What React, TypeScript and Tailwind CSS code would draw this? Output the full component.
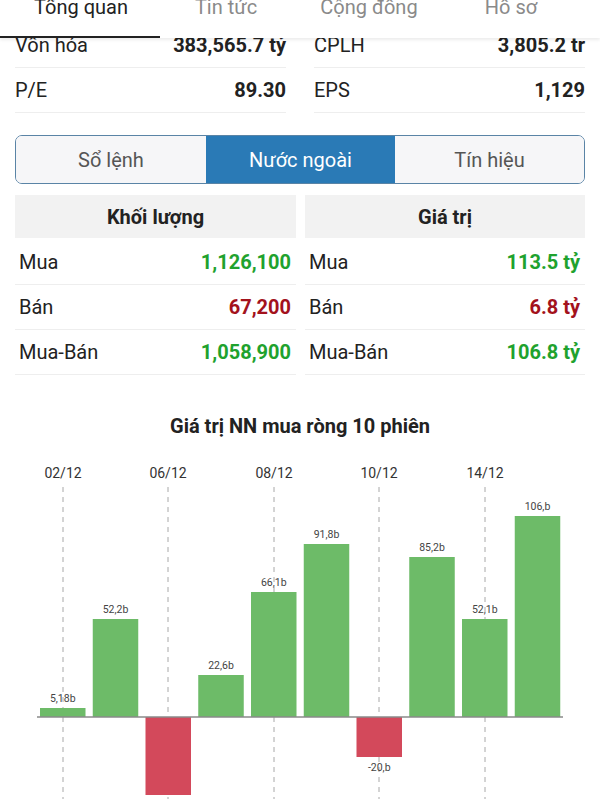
import React from 'react'

const font = { fontFamily: 'Roboto, "Noto Sans", sans-serif' }

const tabs = [
  { label: 'Tổng quan', w: 'w-[162px]', active: true },
  { label: 'Tin tức', w: 'w-[128px]', active: false },
  { label: 'Cộng đồng', w: 'w-[158px]', active: false },
  { label: 'Hồ sơ', w: 'w-[126px]', active: false },
]

const info = [
  [
    { k: 'Vốn hóa', v: '383,565.7 tỷ' },
    { k: 'P/E', v: '89.30' },
  ],
  [
    { k: 'CPLH', v: '3,805.2 tr' },
    { k: 'EPS', v: '1,129' },
  ],
]

const tables = [
  {
    title: 'Khối lượng',
    rows: [
      { k: 'Mua', v: '1,126,100', up: true },
      { k: 'Bán', v: '67,200', up: false },
      { k: 'Mua-Bán', v: '1,058,900', up: true },
    ],
  },
  {
    title: 'Giá trị',
    rows: [
      { k: 'Mua', v: '113.5 tỷ', up: true },
      { k: 'Bán', v: '6.8 tỷ', up: false },
      { k: 'Mua-Bán', v: '106.8 tỷ', up: true },
    ],
  },
]

// chart data: height in px, label
const bars = [
  { h: 9, label: '5,18b' },
  { h: 98, label: '52,2b' },
  { h: -78, label: '' },
  { h: 42, label: '22,6b' },
  { h: 125, label: '66,1b' },
  { h: 173, label: '91,8b' },
  { h: -40, label: '-20,b' },
  { h: 160, label: '85,2b' },
  { h: 98, label: '52,1b' },
  { h: 201, label: '106,b' },
]

const dates = [
  { x: 63, t: '02/12' },
  { x: 168, t: '06/12' },
  { x: 274, t: '08/12' },
  { x: 379, t: '10/12' },
  { x: 485, t: '14/12' },
]

function Chart() {
  const base = 278
  return (
    <svg width="600" height="360" viewBox="0 0 600 360" className="block">
      {dates.map((d) => (
        <g key={d.t}>
          <text x={d.x} y={39} textAnchor="middle" fontSize="14" fill="#333" style={font}>
            {d.t}
          </text>
          <line x1={d.x} y1={48} x2={d.x} y2={360} stroke="#a8a8a8" strokeWidth="1" strokeDasharray="5 5" />
        </g>
      ))}
      {bars.map((b, i) => {
        const x = 40 + i * 52.75
        const y = b.h > 0 ? base - b.h : base
        return (
          <rect
            key={i}
            x={x}
            y={y}
            width={45.5}
            height={Math.abs(b.h)}
            fill={b.h > 0 ? '#6dbb68' : '#d3495b'}
          />
        )
      })}
      <line x1={37} y1={base} x2={563} y2={base} stroke="#8a8a8a" strokeWidth="1.5" />
      {bars.map((b, i) => {
        if (!b.label) return null
        const cx = 40 + i * 52.75 + 22.75
        const y = b.h > 0 ? base - b.h - 6 : base - b.h + 14
        return (
          <text key={i} x={cx} y={y} textAnchor="middle" fontSize="10.5" fill="#444" style={font}>
            {b.label}
          </text>
        )
      })}
    </svg>
  )
}

export default function App() {
  return (
    <div className="relative w-[600px] h-[800px] overflow-hidden bg-white text-[#222]" style={font}>
      {/* thanh tab trên cùng */}
      <div className="absolute top-0 left-0 right-0 h-[38px] bg-white shadow-[0_2px_3px_rgba(0,0,0,0.08)] z-10">
        <div className="flex">
          {tabs.map((t) => (
            <div
              key={t.label}
              className={`${t.w} text-center text-[20px] leading-[14px] ${t.active ? 'text-[#222]' : 'text-[#8a8a8a]'}`}
            >
              {t.label}
            </div>
          ))}
        </div>
        <div className="absolute left-0 top-[36px] w-[160px] h-[2px] bg-[#222]" />
      </div>

      <div className="pt-[23px]">
        {/* thông tin cơ bản */}
        <div className="grid grid-cols-2 gap-x-[28px] px-[15px]">
          {info.map((col, ci) => (
            <div key={ci}>
              {col.map((r) => (
                <div key={r.k} className="flex items-center justify-between h-[45px] border-b border-[#eeeeee] text-[20px]">
                  <span>{r.k}</span>
                  <span className="font-bold">{r.v}</span>
                </div>
              ))}
            </div>
          ))}
        </div>

        {/* segmented control */}
        <div className="mx-[15px] mt-[22px] h-[49px] flex rounded-[7px] border-[1.5px] border-[#5a84a6] overflow-hidden text-[20px]">
          <div className="w-[190px] flex items-center justify-center bg-[#f6f6f8] text-[#555]">Sổ lệnh</div>
          <div className="w-[189px] flex items-center justify-center bg-[#2a7ab6] text-white">Nước ngoài</div>
          <div className="flex-1 flex items-center justify-center bg-[#f6f6f8] text-[#555]">Tín hiệu</div>
        </div>

        {/* bảng nước ngoài */}
        <div className="grid grid-cols-[281px_280px] gap-x-[9px] px-[15px] mt-[11px]">
          {tables.map((tb) => (
            <div key={tb.title}>
              <div className="h-[43px] mb-[2px] bg-[#f2f2f2] flex items-center justify-center text-[20px] font-bold">
                {tb.title}
              </div>
              {tb.rows.map((r) => (
                <div key={r.k} className="flex items-center justify-between h-[45px] border-b border-[#eeeeee] pl-[4px] pr-[5px] text-[20px]">
                  <span>{r.k}</span>
                  <span className={`font-bold ${r.up ? 'text-[#1fa22e]' : 'text-[#a3121c]'}`}>{r.v}</span>
                </div>
              ))}
            </div>
          ))}
        </div>

        {/* biểu đồ */}
        <div className="mt-[38px] text-center text-[20px] leading-[26px] font-bold text-[#222]">
          Giá trị NN mua ròng 10 phiên
        </div>
        <Chart />
      </div>
    </div>
  )
}
